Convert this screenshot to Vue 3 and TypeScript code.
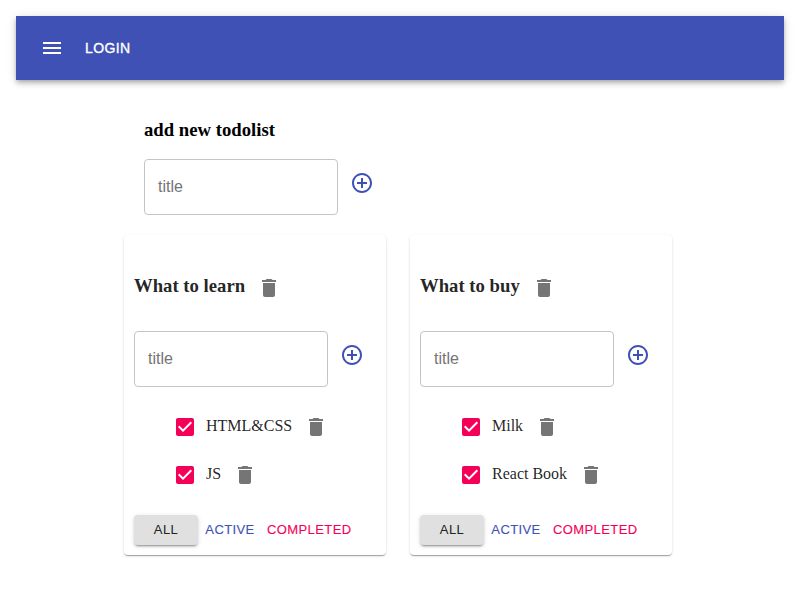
<script setup lang="ts">
import { ref } from 'vue'

type Filter = 'all' | 'active' | 'completed'
interface Task { title: string; done: boolean }
interface TodoList { title: string; filter: Filter; tasks: Task[] }

const filters: Filter[] = ['all', 'active', 'completed']
const lists = ref<TodoList[]>([
  { title: 'What to learn', filter: 'all', tasks: [{ title: 'HTML&CSS', done: true }, { title: 'JS', done: true }] },
  { title: 'What to buy', filter: 'all', tasks: [{ title: 'Milk', done: true }, { title: 'React Book', done: true }] },
])

const visible = (list: TodoList): Task[] =>
  list.tasks.filter(t => list.filter === 'all' || t.done === (list.filter === 'completed'))
const removeList = (i: number) => lists.value.splice(i, 1)
const removeTask = (list: TodoList, task: Task) => { list.tasks = list.tasks.filter(t => t !== task) }

const menuPath = 'M3 18h18v-2H3v2zm0-5h18v-2H3v2zm0-7v2h18V6H3z'
const addPath = 'M13 7h-2v4H7v2h4v4h2v-4h4v-2h-4V7zm-1-5C6.48 2 2 6.48 2 12s4.48 10 10 10 10-4.48 10-10S17.52 2 12 2zm0 18c-4.41 0-8-3.59-8-8s3.59-8 8-8 8 3.59 8 8-3.59 8-8 8z'
const deletePath = 'M6 19c0 1.1.9 2 2 2h8c1.1 0 2-.9 2-2V7H6v12zM19 4h-3.5l-1-1h-5l-1 1H5v2h14V4z'
const checkedPath = 'M19 3H5c-1.11 0-2 .9-2 2v14c0 1.1.89 2 2 2h14c1.11 0 2-.9 2-2V5c0-1.1-.89-2-2-2zm-9 14l-5-5 1.41-1.41L10 14.17l7.59-7.59L19 8l-9 9z'
const uncheckedPath = 'M19 5v14H5V5h14m0-2H5c-1.1 0-2 .9-2 2v14c0 1.1.9 2 2 2h14c1.1 0 2-.9 2-2V5c0-1.1-.9-2-2-2z'
</script>

<template>
  <div class="page">
    <header class="bar">
      <button class="icon-btn menu"><svg viewBox="0 0 24 24"><path :d="menuPath" /></svg></button>
      <button class="login">Login</button>
    </header>
    <main class="container">
      <section class="new-list">
        <h3>add new todolist</h3>
        <div class="add-form">
          <input class="field" placeholder="title">
          <button class="icon-btn add"><svg viewBox="0 0 24 24"><path :d="addPath" /></svg></button>
        </div>
      </section>
      <section class="lists">
        <article v-for="(list, i) in lists" :key="list.title" class="card">
          <div class="card-head">
            <h3>{{ list.title }}</h3>
            <button class="icon-btn" @click="removeList(i)"><svg viewBox="0 0 24 24"><path :d="deletePath" /></svg></button>
          </div>
          <div class="add-form">
            <input class="field" placeholder="title">
            <button class="icon-btn add"><svg viewBox="0 0 24 24"><path :d="addPath" /></svg></button>
          </div>
          <ul class="tasks">
            <li v-for="task in visible(list)" :key="task.title">
              <button class="icon-btn check" :class="{ checked: task.done }" @click="task.done = !task.done">
                <svg viewBox="0 0 24 24"><path :d="task.done ? checkedPath : uncheckedPath" /></svg>
              </button>
              <span>{{ task.title }}</span>
              <button class="icon-btn" @click="removeTask(list, task)"><svg viewBox="0 0 24 24"><path :d="deletePath" /></svg></button>
            </li>
          </ul>
          <div class="filters">
            <button v-for="f in filters" :key="f" :class="['filter', f, { selected: list.filter === f }]" @click="list.filter = f">{{ f }}</button>
          </div>
        </article>
      </section>
    </main>
  </div>
</template>

<style>
body { background: #fff; }
</style>

<style scoped>
.page { padding: 16px; font: 16px "Liberation Serif", "Times New Roman", serif; color: #000; }
.page * { box-sizing: border-box; }
button { border: 0; background: transparent; padding: 0; cursor: pointer; }
h3 { margin: 0; font-size: 18.72px; line-height: 22px; font-weight: 700; }
.bar {
  height: 64px; padding: 0 24px; display: flex; align-items: center; background: #3f51b5; color: #fff;
  box-shadow: 0 2px 4px -1px rgba(0,0,0,.2), 0 4px 5px rgba(0,0,0,.14), 0 1px 10px rgba(0,0,0,.12);
}
.icon-btn { flex: none; width: 48px; height: 48px; padding: 12px; color: rgba(0,0,0,.54); }
.icon-btn svg { display: block; width: 24px; height: 24px; fill: currentColor; }
.menu { margin-left: -12px; color: #fff; }
.login {
  margin-left: 1px; padding: 6px 8px; color: #fff; text-transform: uppercase;
  font: 500 14px/24.5px "Liberation Sans", Arial, sans-serif; letter-spacing: .4px;
  -webkit-text-stroke: .35px currentColor;
}
.container { padding: 39px 108px 0; }
.new-list { padding: 0 20px; }
.add-form { display: flex; align-items: flex-start; }
.new-list .add-form { margin-top: 18px; }
.field {
  width: 194px; height: 56px; padding: 0 13px; border: 1px solid #c4c4c4; border-radius: 4px; background: transparent;
  font: 16px "Liberation Sans", Arial, sans-serif; outline: none;
}
.field::placeholder { color: #757575; opacity: 1; }
.add { color: #3f51b5; }
.lists { display: flex; gap: 24px; margin-top: 20px; }
.card {
  width: 262px; height: 320px; padding: 10px; border-radius: 4px; color: rgba(0,0,0,.87);
  box-shadow: 0 2px 1px -1px rgba(0,0,0,.2), 0 1px 1px rgba(0,0,0,.14), 0 1px 3px rgba(0,0,0,.12);
}
.card-head { display: flex; align-items: center; height: 48px; margin: 19px 0; }
.card-head h3 { position: relative; top: -2px; }
.tasks { list-style: none; margin: 16px 0; padding: 0 0 0 30px; }
.tasks li { display: flex; align-items: center; height: 48px; }
.tasks span { position: relative; top: -1px; }
.check { width: 42px; height: 42px; padding: 9px; }
.check.checked { color: #f50057; }
.filters { display: flex; }
.filter {
  min-width: 64px; height: 30px; padding: 0 5px; text-transform: uppercase; border-radius: 4px;
  font: 500 13px/22px "Liberation Sans", Arial, sans-serif; letter-spacing: .4px;
  -webkit-text-stroke: .12px currentColor;
}
.filter.all { color: rgba(0,0,0,.87); }
.filter.active { color: #3f51b5; }
.filter.completed { color: #f50057; }
.filter.selected {
  background: #e0e0e0;
  box-shadow: 0 3px 1px -2px rgba(0,0,0,.2), 0 2px 2px rgba(0,0,0,.14), 0 1px 5px rgba(0,0,0,.12);
}
</style>
